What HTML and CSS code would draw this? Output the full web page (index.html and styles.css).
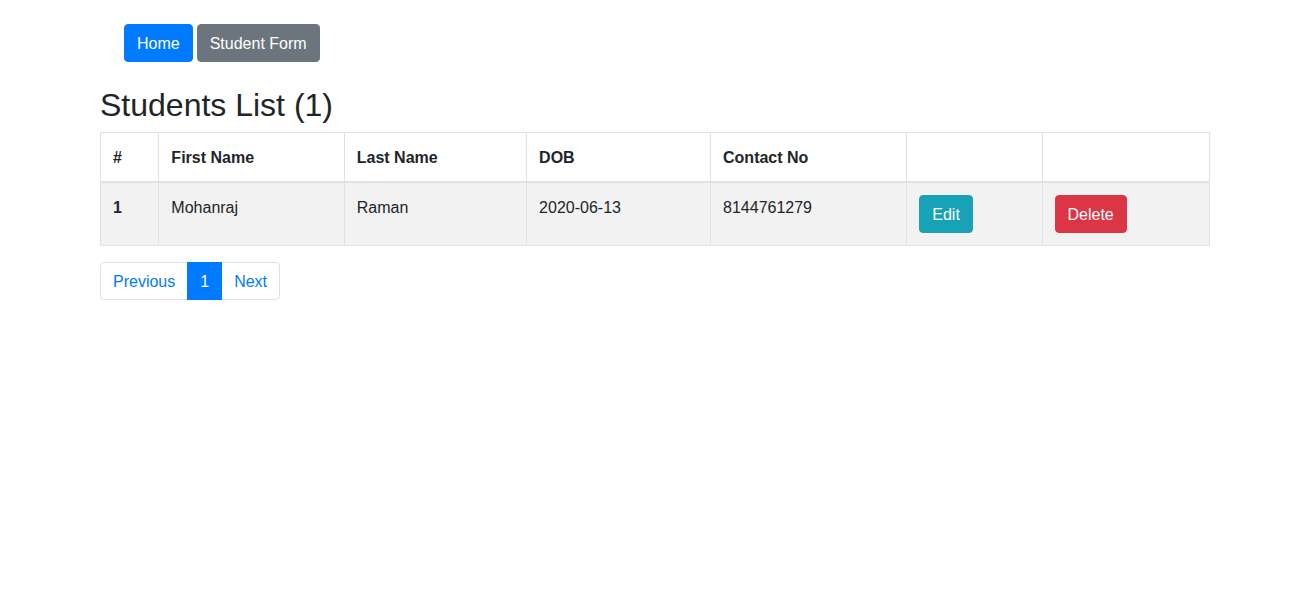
FILE: index.html
```html
<!DOCTYPE html>
<html lang="en">
<head>
<meta charset="utf-8">
<title>Students List</title>
<link rel="stylesheet" href="styles.css">
</head>
<body>
<div class="container">
  <nav class="topnav">
    <a class="btn btn-primary" href="#">Home</a>
    <a class="btn btn-secondary" href="#">Student Form</a>
  </nav>
  <h2 class="title">Students List (1)</h2>
  <table class="table">
    <thead>
      <tr>
        <th>#</th>
        <th>First Name</th>
        <th>Last Name</th>
        <th>DOB</th>
        <th>Contact No</th>
        <th></th>
        <th></th>
      </tr>
    </thead>
    <tbody>
      <tr class="odd">
        <th>1</th>
        <td>Mohanraj</td>
        <td>Raman</td>
        <td>2020-06-13</td>
        <td>8144761279</td>
        <td><button class="btn btn-info">Edit</button></td>
        <td><button class="btn btn-danger">Delete</button></td>
      </tr>
    </tbody>
  </table>
  <ul class="pagination">
    <li class="page-item"><a class="page-link first" href="#">Previous</a></li>
    <li class="page-item"><a class="page-link active" href="#">1</a></li>
    <li class="page-item"><a class="page-link last" href="#">Next</a></li>
  </ul>
</div>
</body>
</html>
```

FILE: styles.css
```css
* { box-sizing: border-box; }
html, body {
  margin: 0;
  font-family: "Liberation Sans", Arial, sans-serif;
  font-size: 16px;
  line-height: 1.5;
  color: #212529;
  background: #fff;
}
.container {
  width: 1140px;
  margin: 0 auto;
  padding: 0 15px;
}
.topnav {
  display: flex;
  gap: 4px;
  padding: 24px 0 0 24px;
}
.btn {
  display: inline-block;
  font-family: inherit;
  font-size: 16px;
  line-height: 24px;
  padding: 7px 12px 5px;
  border: 1px solid transparent;
  border-radius: 4px;
  color: #fff;
  text-decoration: none;
  cursor: pointer;
}
.btn-primary { background: #007bff; border-color: #007bff; }
.btn-secondary { background: #6c757d; border-color: #6c757d; }
.btn-info { background: #17a2b8; border-color: #17a2b8; }
.btn-danger { background: #dc3545; border-color: #dc3545; }
.title {
  margin: 24px 0 8px;
  font-size: 32px;
  font-weight: 500;
  line-height: 1.2;
}
.table {
  width: 100%;
  border-collapse: collapse;
  margin-bottom: 16px;
  border: 1px solid #dee2e6;
}
.table th, .table td {
  padding: 13px 12px 11px;
  border: 1px solid #dee2e6;
  vertical-align: top;
  text-align: left;
}
.table td:nth-child(6), .table td:nth-child(7) { padding-top: 12px; padding-bottom: 12px; }
.table th { font-weight: 700; }
.table thead th {
  vertical-align: bottom;
  border-bottom: 2px solid #dee2e6;
}
.table tbody tr.odd { background: rgba(0, 0, 0, 0.05); }
.pagination {
  display: flex;
  list-style: none;
  margin: 0;
  padding: 0;
}
.page-link {
  display: block;
  padding: 9px 12px 7px;
  margin-left: -1px;
  line-height: 20px;
  color: #007bff;
  text-decoration: none;
  background: #fff;
  border: 1px solid #dee2e6;
}
.page-link.first { margin-left: 0; border-radius: 4px 0 0 4px; }
.page-link.last { border-radius: 0 4px 4px 0; }
.page-link.active {
  position: relative;
  z-index: 1;
  color: #fff;
  background: #007bff;
  border-color: #007bff;
}
```
